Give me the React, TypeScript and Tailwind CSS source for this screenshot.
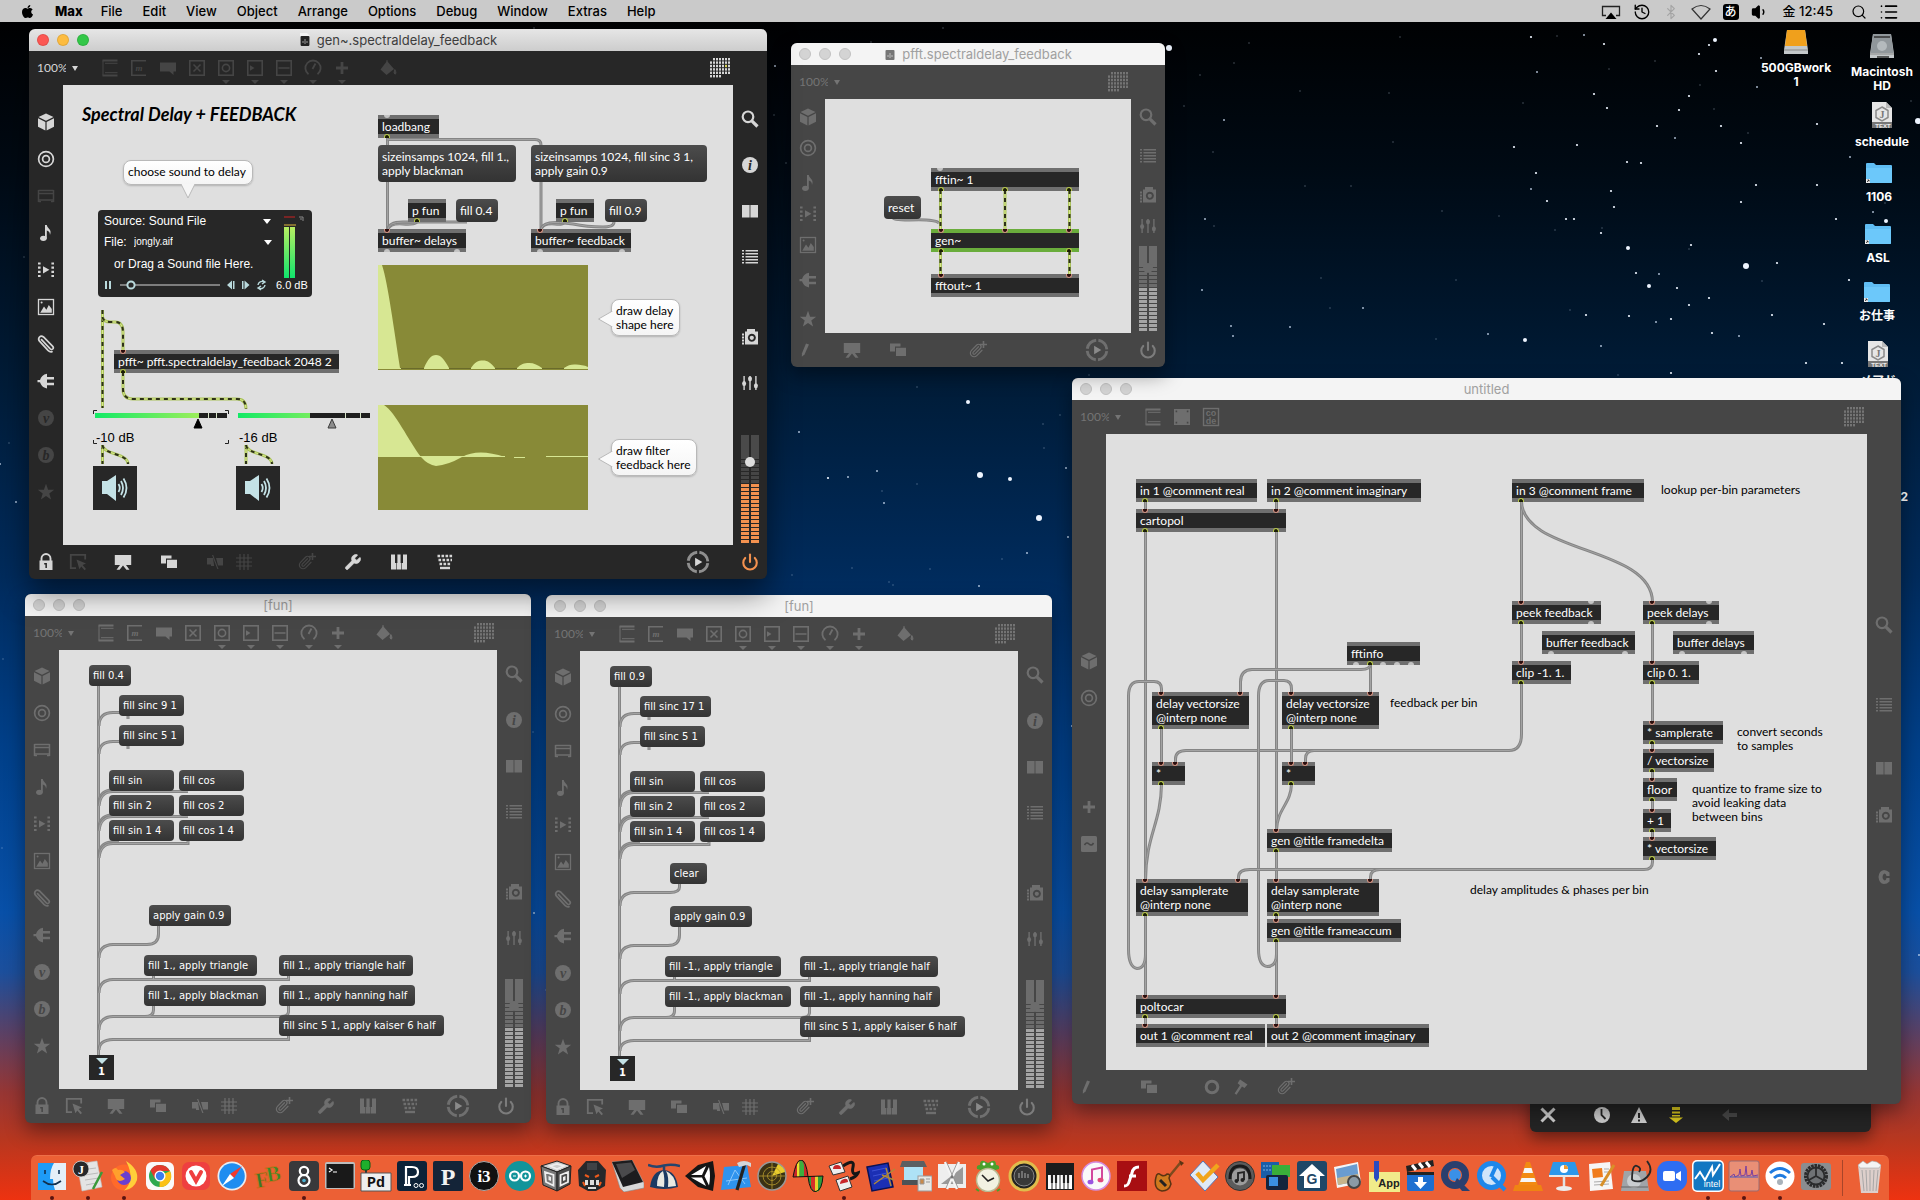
import { type ReactNode } from 'react'
import { Airplay, Bluetooth, History, List, Paperclip, Power, Search, Volume1, Wrench } from 'lucide-react'
import { FaApple } from 'react-icons/fa'

interface PatchNode {
  x: number
  y: number
  w: number
  text: string
  kind?: 'obj' | 'msg' | 'gen'
  tall?: boolean
  ins?: number[]
  outs?: number[]
  openIns?: number[]
  openOuts?: number[]
}

interface Comment {
  x: number
  y: number
  w: number
  text: string
}

interface Tool {
  icon: string
  gap: string
  dim?: boolean
}

// ─── toolbar glyphs ────────────────────────────────────────────────────
const GLYPHS: Record<string, ReactNode> = {
  cube: (
    <g fill="currentColor">
      <path d="M10 1.5 17.5 5 10 8.8 2.5 5Z" />
      <path d="M2 6.2 9.4 9.9V18.5L2 14.8Z" />
      <path d="M18 6.2 10.6 9.9V18.5L18 14.8Z" />
    </g>
  ),
  target: (
    <g fill="none" stroke="currentColor" strokeWidth="1.7">
      <circle cx="10" cy="10" r="7.4" />
      <circle cx="10" cy="10" r="3.4" />
    </g>
  ),
  module: (
    <g fill="none" stroke="currentColor" strokeWidth="1.5">
      <path d="M2.5 4.5H17.5M2.5 4V16M17.5 4V16M2.5 7.5H17.5M2.5 14H17.5" />
      <path d="M2.5 15.5H5M15 15.5H17.5" />
    </g>
  ),
  note: (
    <g fill="currentColor">
      <ellipse cx="7.4" cy="15.3" rx="3.3" ry="2.6" />
      <path d="M9 2H10.8C11.200 5.500 16.400 6.200 14 12 14 9 12.400 8.200 10.800 7.600V15.500H9Z" />
    </g>
  ),
  video: (
    <g fill="currentColor">
      <path d="M2 2.5H4.6V4.6H2ZM2 6.6H4.6V8.7H2ZM2 10.8H4.6V12.9H2ZM2 15H4.6V17.1H2Z" />
      <path d="M15.4 2.5H18V4.6H15.4ZM15.4 6.6H18V8.7H15.4ZM15.4 10.8H18V12.9H15.4ZM15.4 15H18V17.1H15.4Z" />
      <path d="M7 6.2 13.4 9.8 7 13.4Z" />
    </g>
  ),
  image: (
    <g>
      <rect x="2.5" y="2.5" width="15" height="15" fill="none" stroke="currentColor" strokeWidth="1.3" />
      <path d="M4.2 15.8 8 9.5 10.4 12.8 12.8 8 15.8 12V15.8Z" fill="currentColor" />
      <circle cx="5.6" cy="5.6" r="1" fill="currentColor" />
    </g>
  ),
  clip: <path d="M5 5.500 13.500 14.500Q15 16 16.300 14.800 17.500 13.500 16 12L7 2.800Q4.800 1 3 2.800 1.300 4.800 3 7L11.500 16.200Q13.500 18.200 15.500 17.500" transform="translate(.500 .200)" fill="none" stroke="currentColor" strokeWidth="1.700" strokeLinecap="round" />,
  plug: (
    <path
      d="M1.5 9H4C5 6 7 3.5 11 2.8V6H18V8.4H11V11.8H18V14.2H11V17.4C7 16.8 5 14 4 11.2H1.5Z"
      fill="currentColor"
    />
  ),
  star: <path d="M10 1.8 12.1 7.7 18.2 7.8 13.3 11.6 15.1 17.6 10 14 4.9 17.6 6.7 11.6 1.8 7.8 7.9 7.7Z" fill="currentColor" />,
  search: (
    <g fill="none" stroke="currentColor">
      <circle cx="8" cy="7.800" r="5.300" strokeWidth="2.200" />
      <path d="M11.800 11.800 17.500 17.500" strokeWidth="3.200" />
    </g>
  ),
  book: <path d="M2 4H9.6V16.5H2ZM10.4 4H18V16.5H10.4Z" fill="currentColor" />,
  list: (
    <path
      d="M2 3H4V4.6H2ZM5.5 3H18V4.6H5.5ZM2 6H4V7.6H2ZM5.5 6H18V7.6H5.5ZM2 9H4V10.6H2ZM5.5 9H18V10.6H5.5ZM2 12H4V13.6H2ZM5.5 12H18V13.6H5.5ZM2 15H4V16.6H2ZM5.5 15H18V16.6H5.5Z"
      fill="currentColor"
    />
  ),
  camera: (
    <g>
      <path fillRule="evenodd" d="M5 4.5H7V2H15V4.5H18V17.5H5ZM11.8 6.8a4 4 0 1 0 .1 0Z" fill="currentColor" />
      <circle cx="11.8" cy="10.8" r="2.1" fill="currentColor" />
      <path d="M2 6.5H4V8.5H2ZM2 9.5H4V11.5H2ZM2 12.5H4V14.5H2ZM2 15.5H4V17.5H2Z" fill="currentColor" />
    </g>
  ),
  sliders: (
    <g fill="currentColor">
      <path d="M3.4 3H4.8V17H3.4ZM9.3 3H10.7V17H9.3ZM15.2 3H16.6V17H15.2Z" />
      <ellipse cx="4.1" cy="10.5" rx="2" ry="2.6" />
      <ellipse cx="10" cy="5.8" rx="2" ry="2.6" />
      <ellipse cx="15.9" cy="12.8" rx="2" ry="2.6" />
    </g>
  ),
  power: <Power x="1" y="1" width="18" height="18" strokeWidth={2.8} />,
  lock: (
    <g>
      <path d="M5.5 9V6.5a4.5 4.5 0 0 1 9 0V9" fill="none" stroke="currentColor" strokeWidth="1.9" />
      <path fillRule="evenodd" d="M3.5 8.5H16.5V18H3.5ZM8.2 11V12.5H9.4V16H10.9V11Z" fill="currentColor" />
    </g>
  ),
  pencil: <path d="M11 3.5 14 4.5 9.5 14.5 6.8 16.8 7 13.2Z" fill="currentColor" />,
  select: (
    <g>
      <path d="M8 16.2H2.8V2.8H17.2V7.5" fill="none" stroke="currentColor" strokeWidth="1.8" />
      <path d="M8.5 7.5 18 11.5 14.6 13 18 17 16.5 18.3 13.3 14.4 11.4 17.2Z" fill="currentColor" />
    </g>
  ),
  easel: <path d="M1.8 3H18.2V13H13L16.5 17.8H13.4L10 13.6 6.6 17.8H3.5L7 13H1.8Z" fill="currentColor" />,
  copies: <path d="M2 3.5H12.5V6.5H7V11.5H2ZM8 7.8H18V16H8Z" fill="currentColor" />,
  cut: <path d="M2 6H8L9.200 14H6V12.5H2ZM7 3H8.200L13.5 17H12.3ZM11 6H18V13.5H13Z" fill="currentColor" />,
  grid: <path d="M6 2V18M10 2V18M14 2V18M2 6H18M2 10H18M2 14H18" stroke="currentColor" strokeWidth="1.2" fill="none" />,
  clipAdd: (
    <g>
      <Paperclip x="0.5" y="3" width="15" height="15" strokeWidth={1.9} />
      <path d="M15.500 1V8M12 4.500H19" stroke="currentColor" strokeWidth="1.6" />
    </g>
  ),
  wrench: <Wrench x="1" y="1" width="18" height="18" fill="currentColor" strokeWidth={1} />,
  piano: <path d="M2 2.5H6V11H7V17.5H2ZM8 2.5H8.4V11H7.6V17.5H12.4V11H11.6V2.5ZM14 2.5H18V17.5H13V11H14Z" fill="currentColor" />,
  keyboard: (
    <g stroke="currentColor" fill="none">
      <path d="M2.5 4H18M3.5 8H17M4.5 12H16" strokeWidth="2.4" strokeDasharray="2.6 1.4" />
      <path d="M5 16H15" strokeWidth="2.4" />
    </g>
  ),
  play: (
    <g>
      <circle cx="10" cy="10" r="8.2" fill="none" stroke="currentColor" strokeOpacity="0.6" strokeWidth="2.4" strokeDasharray="11 1.880" strokeDashoffset="-0.94" />
      <path d="M7.6 6.4 13.6 10 7.6 13.6Z" fill="currentColor" />
    </g>
  ),
  object: (
    <g fill="none" stroke="currentColor">
      <path d="M2.5 2.5H17.5M2.5 17.5H17.5" strokeWidth="1.8" />
      <path d="M3 2.5V17.5M5 5.3H17.5M5 14.7H17.5" strokeWidth="1" />
    </g>
  ),
  comment: <path d="M2 4.5H18V13.5H15.5V17L11.5 13.5H2Z" fill="currentColor" />,
  toggle: (
    <g fill="none" stroke="currentColor" strokeWidth="1.6">
      <rect x="2.8" y="2.8" width="14.4" height="14.4" />
      <path d="M6.5 6.5 13.5 13.5M13.5 6.5 6.5 13.5" />
    </g>
  ),
  bang: (
    <g fill="none" stroke="currentColor" strokeWidth="1.6">
      <rect x="2.8" y="2.8" width="14.4" height="14.4" />
      <circle cx="10" cy="10" r="3.6" />
    </g>
  ),
  number: (
    <g>
      <rect x="2.8" y="2.8" width="14.4" height="14.4" fill="none" stroke="currentColor" strokeWidth="1.6" />
      <path d="M5 7.2 9.5 10 5 12.8Z" fill="currentColor" />
    </g>
  ),
  slider: (
    <g fill="none" stroke="currentColor" strokeWidth="1.6">
      <rect x="2.8" y="2.8" width="14.4" height="14.4" />
      <path d="M4.5 10H15.5" />
    </g>
  ),
  dial: (
    <g fill="none" stroke="currentColor" strokeWidth="1.8">
      <path d="M5.5 16.2a7.6 7.6 0 1 1 9 0M9.5 11 12.5 5.5" />
    </g>
  ),
  plus: <path d="M8.6 4H11.4V8.6H16V11.4H11.4V16H8.6V11.4H4V8.6H8.6Z" fill="currentColor" />,
  bucket: (
    <g>
      <path d="M9 3 16 11 8.5 17 2.5 11.5Z" fill="currentColor" />
      <path d="M9 9V2M16.8 11.5Q19 15.5 17 16.2 15.2 15.5 16.8 11.5Z" fill="currentColor" stroke="currentColor" strokeWidth="1" />
    </g>
  ),
  panel: <path fillRule="evenodd" d="M2 2H18V18H2ZM3.6 3.6V5.2H5.2V3.6ZM14.8 3.6V5.2H16.4V3.6ZM3.6 14.8V16.4H5.2V14.8ZM14.8 14.8V16.4H16.4V14.8Z" fill="currentColor" />,
  ring: <circle cx="10" cy="10" r="5.8" fill="none" stroke="currentColor" strokeWidth="3" />,
  hammer: <path d="M9 2.5 16.5 7.5 13.5 11 11 9.6 5.5 17.8 3.6 16.6 9 8.3 6.6 6.3Z" fill="currentColor" />,
  tilde: (
    <g>
      <rect x="2" y="2" width="16" height="16" rx="1.5" fill="currentColor" />
      <path d="M5.5 11Q7.5 7.5 10 10T14.5 9" stroke="#464646" strokeWidth="1.6" fill="none" />
    </g>
  ),
}

const LETTER_GLYPHS: Record<string, { text: string; disc: boolean }> = {
  info: { text: 'i', disc: true },
  v: { text: 'v', disc: true },
  b: { text: 'b', disc: true },
  message: { text: 'm', disc: false },
}

function Glyph({ name, active }: { name: string; active: boolean }) {
  const letter = LETTER_GLYPHS[name]
  return (
    <svg viewBox="0 0 20 20" className="size-full">
      {GLYPHS[name]}
      {letter?.disc && (
        <>
          <circle cx="10" cy="10" r="8" fill="currentColor" />
          <text x="10" y="14.5" textAnchor="middle" fontSize="14" fontStyle="italic" fontWeight="700" fontFamily="Liberation Serif, serif" fill={active ? '#272727' : '#464646'}>
            {letter.text}
          </text>
        </>
      )}
      {name === 'message' && (
        <>
          <path d="M17 2.8H2.8V17.2H17" fill="none" stroke="currentColor" strokeWidth="1.6" />
          <text x="10" y="13" textAnchor="middle" fontSize="9" fontStyle="italic" fontWeight="700" fontFamily="Liberation Serif, serif" fill="currentColor">
            m
          </text>
        </>
      )}
      {name === 'code' && (
        <>
          <rect x="2.5" y="1.5" width="15" height="17" fill="none" stroke="currentColor" strokeWidth="1.4" />
          <text x="10" y="9" textAnchor="middle" fontSize="9" fontWeight="700" fontFamily="Liberation Sans, sans-serif" fill="currentColor">co</text>
          <text x="10" y="17" textAnchor="middle" fontSize="9" fontWeight="700" fontFamily="Liberation Sans, sans-serif" fill="currentColor">de</text>
        </>
      )}
      {name === 'c' && <path d="M15.500 5.500Q13 3 10 3 5 3.500 4.500 10 5 16.500 10 17 13 17 15.500 14.500V11H12.500Q12 13.500 10.500 13.500 8.500 13 8.500 10T10.500 6.500Q12 6.500 12.500 9H15.500Z" fill="currentColor" />}
    </svg>
  )
}

function GridGlyph({ active }: { active: boolean }) {
  const cells = []
  for (let r = 0; r < 6; r++) {
    for (let c = 0; c < 7; c++) {
      if ((r === 0 && c === 0) || (r === 5 && c > 3)) continue
      cells.push(<rect key={`${r}-${c}`} x={c * 3} y={r * 3.4} width="2" height="2.4" fill={active && r === 2 && c === 5 ? '#d8d35a' : 'currentColor'} />)
    }
  }
  return <svg viewBox="0 0 21 20" className="h-5 w-[21px]">{cells}</svg>
}

function Meter({ active, short }: { active: boolean; short?: boolean }) {
  const rows = short ? 16 : 21
  const total = short ? 85 : 108
  const lit = short ? 11 : 15
  const pitch = 4
  return (
    <svg width="20" height={total} viewBox={`0 0 20 ${total}`} aria-label="output level">
      {[1, 11].map((x) => (
        <g key={x}>
          <rect x={x} y="0" width="8" height={total - rows * pitch} fill={active ? '#4a4a4a' : '#6c6c6c'} />
          {Array.from({ length: rows }, (_, i) => (
            <rect key={i} x={x} y={total - 3 - i * pitch} width="8" height="3" fill={i < lit ? (active ? '#f3914f' : '#a4a4a4') : active ? '#454545' : '#6c6c6c'} />
          ))}
        </g>
      ))}
      <circle cx="10" cy={short ? 22 : 27} r="5" fill={active ? '#dedede' : '#6c6c6c'} />
    </svg>
  )
}

// ─── window chrome ─────────────────────────────────────────────────────
function ToolButton({ tool, active, menu }: { tool: Tool; active: boolean; menu?: boolean }) {
  const tone = active ? (tool.dim ? 'text-[#454545]' : 'text-[#d6d6d6]') : 'text-[#6e6e6e]'
  return (
    <button type="button" aria-label={tool.icon} className={`relative size-5 shrink-0 ${tone} ${tool.gap}`}>
      <Glyph name={tool.icon} active={active} />
      {menu && <span className="absolute top-[22px] left-1.5 border-x-4 border-t-4 border-x-transparent border-t-current" />}
    </button>
  )
}

interface WindowProps {
  title: string
  place: string
  active?: boolean
  file?: boolean
  top: Tool[]
  left: Tool[]
  right: Tool[]
  bottom: Tool[]
  playGap?: string
  powerGap?: string
  meter?: 'long' | 'short'
  children: ReactNode
}

const MENU_TOOLS = ['bang', 'number', 'slider', 'dial', 'plus']

function PatcherWindow(p: WindowProps) {
  const active = p.active ?? false
  const frame = active ? 'bg-[#272727]' : 'bg-[#464646]'
  const lights = active
    ? ['bg-[#fc5753] border-black/10', 'bg-[#fdbc40] border-black/10', 'bg-[#33c748] border-black/10']
    : ['bg-[#d4d4d4] border-[#c2c2c2]', 'bg-[#d4d4d4] border-[#c2c2c2]', 'bg-[#d4d4d4] border-[#c2c2c2]']
  return (
    <section className={`absolute flex flex-col overflow-hidden rounded-md ${frame} ${p.place} ${active ? 'shadow-[0_14px_30px_rgba(0,0,0,0.5)]' : 'shadow-[0_8px_20px_rgba(0,0,0,0.4)]'}`}>
      <header className={`relative flex h-[22px] shrink-0 items-center justify-center ${active ? 'bg-linear-to-b from-[#e6e6e6] to-[#cdcdcd]' : 'bg-[#f4f4f4]'}`}>
        <div className="absolute left-2 flex gap-2">
          {lights.map((c, i) => (
            <button key={i} type="button" aria-label="window control" className={`size-3 rounded-full border ${c}`} />
          ))}
        </div>
        {p.file && (
          <svg viewBox="0 0 12 14" className={`mr-1.5 h-3.5 w-3 ${active ? '' : 'opacity-60'}`}>
            <path d="M1 0H8L11 3V13H1Z" fill="#f2f2f2" />
            <rect x="1.500" y="3" width="9" height="10" rx="1" fill="#222" />
            <path d="M4 10V8M6 11V6M8 10V8" stroke="#999" />
          </svg>
        )}
        <h2 className={`pt-px text-[13px] [font-family:Inter,sans-serif] ${active ? 'text-[#3d3d3d]' : 'text-[#a0a0a0]'}`}>{p.title}</h2>
      </header>
      <div className={`flex h-[34px] shrink-0 items-center ${active ? 'text-[#d6d6d6]' : 'text-[#747474]'}`}>
        <div className="flex w-[70px] items-center gap-1.5 pl-2">
          <select aria-label="zoom" className="w-[29px] appearance-none text-[12px] leading-4 [font-family:Lato,sans-serif]">
            <option>100%</option>
          </select>
          <span className="border-x-3 border-t-5 border-x-transparent border-t-current" />
        </div>
        {p.top.map((t) => (
          <ToolButton key={t.icon} tool={t} active={active} menu={MENU_TOOLS.includes(t.icon)} />
        ))}
        <button type="button" aria-label="grid" className="mr-9 ml-auto">
          <GridGlyph active={active} />
        </button>
      </div>
      <div className="flex min-h-0 flex-1">
        <nav className="flex w-[34px] shrink-0 flex-col items-center">
          {p.left.map((t) => (
            <ToolButton key={t.icon} tool={t} active={active} />
          ))}
        </nav>
        <main className="relative flex-1 overflow-hidden bg-[#dfdfdf]">{p.children}</main>
        <nav className="flex w-[34px] shrink-0 flex-col items-center">
          {p.right.map((t) => (
            <ToolButton key={t.icon} tool={t} active={active} />
          ))}
          {p.meter && (
            <div className="mt-auto mb-0.5">
              <Meter active={active} short={p.meter === 'short'} />
            </div>
          )}
        </nav>
      </div>
      <footer className="flex h-[34px] shrink-0 items-center">
        {p.bottom.map((t) => (
          <ToolButton key={t.icon} tool={t} active={active} />
        ))}
        {p.playGap && (
          <>
            <button type="button" aria-label="play" className={`ml-auto size-6 ${active ? 'text-[#d6d6d6]' : 'text-[#8a8a8a]'} ${p.playGap}`}>
              <Glyph name="play" active={active} />
            </button>
            <button type="button" aria-label="audio" className={`size-5 ${p.powerGap ?? 'mr-[7px]'} ${active ? 'text-[#f3914f]' : 'text-[#7c7c7c]'}`}>
              <Glyph name="power" active={active} />
            </button>
          </>
        )}
      </footer>
    </section>
  )
}

// ─── patch contents ────────────────────────────────────────────────────
function Ports({ node }: { node: PatchNode }) {
  return (
    <>
      {node.ins?.map((x) => (
        <span key={`i${x}`} style={{ left: x - 3 }} className="absolute top-0 h-1 w-1.5 rounded-b-full border-x border-b border-[#d29483] bg-[#2a0d0d]" />
      ))}
      {node.outs?.map((x) => (
        <span key={`o${x}`} style={{ left: x - 3 }} className="absolute bottom-0 h-1 w-1.5 rounded-t-full border-x border-t border-[#b8c94a] bg-[#1a1d05]" />
      ))}
      {node.openIns?.map((x) => (
        <span key={`p${x}`} style={{ left: x - 3 }} className="absolute top-0 h-[3px] w-1.5 rounded-b-full bg-[#c4c4c4]" />
      ))}
      {node.openOuts?.map((x) => (
        <span key={`q${x}`} style={{ left: x - 3 }} className="absolute bottom-0 h-[3px] w-1.5 rounded-t-full bg-[#c4c4c4]" />
      ))}
    </>
  )
}

function Box({ node, small }: { node: PatchNode; small?: boolean }) {
  const at = { left: node.x, top: node.y, width: node.w }
  if (node.kind === 'msg') {
    const size = small ? 'h-[21px] text-[10px] leading-[14px] [font-family:"DejaVu_Sans",sans-serif]' : node.tall ? 'h-[37px] text-[12px] leading-[14px]' : 'h-[23px] text-[12px] leading-[14px]'
    return (
      <button type="button" style={at} className={`absolute rounded-[4px] bg-linear-to-b from-[#4c4c4c] to-[#333333] pl-1 text-left whitespace-pre text-white ${size}`}>
        {node.text}
      </button>
    )
  }
  return (
    <div
      style={at}
      className={`absolute border-y-4 bg-[#272727] pt-px pl-1 text-[12px] leading-[14px] whitespace-pre text-white ${node.kind === 'gen' ? 'border-[#6aad3c]' : 'border-[#6f6f6f]'} ${node.tall ? 'h-[37px]' : 'h-[23px]'}`}
    >
      {node.text}
      <div className="absolute inset-x-0 -inset-y-1">
        <Ports node={node} />
      </div>
    </div>
  )
}

function Wires({ paths, signal }: { paths: string[]; signal?: boolean }) {
  return (
    <svg className="absolute inset-0 size-full" fill="none">
      {paths.map((d) =>
        signal ? (
          <g key={d}>
            <path d={d} stroke="#a9c25a" strokeWidth="3" />
            <path d={d} stroke="#d8e88a" strokeWidth="1" />
            <path d={d} stroke="#2d3018" strokeWidth="2" strokeDasharray="4 4" />
          </g>
        ) : (
          <g key={d}>
            <path d={d} stroke="#858585" strokeWidth="3" />
            <path d={d} stroke="#a3a3a3" strokeWidth="1" />
          </g>
        ),
      )}
    </svg>
  )
}

function Notes({ notes }: { notes: Comment[] }) {
  return notes.map((n) => (
    <p key={n.text} style={{ left: n.x, top: n.y, width: n.w }} className="absolute text-[12px] leading-[14px] whitespace-pre text-black">
      {n.text}
    </p>
  ))
}

function Speaker({ x }: { x: number }) {
  return (
    <button type="button" aria-label="dac" style={{ left: x }} className="absolute top-[381px] flex size-11 items-center justify-center bg-[#272727]">
      <svg viewBox="0 0 32 32" className="size-8">
        <path d="M3 9H8L17 3V29L8 22H3Z" fill="#c4e2e6" />
        <path d="M19.5 12Q22 16 19.5 20M22 9Q26 16 22 23M24.5 6.5Q30.500 16 24.500 25.5" stroke="#c4e2e6" strokeWidth="1.8" fill="none" />
      </svg>
    </button>
  )
}

function GainSlider({ x, level, knob, ticks, dark }: { x: number; level: number; knob: number; ticks: number[]; dark: boolean }) {
  return (
    <div style={{ left: x }} className="absolute top-[328px] h-4 w-[132px]">
      <svg viewBox="0 0 132 16" className="h-4 w-[132px]">
        <defs>
          <linearGradient id={`gain${x}`} gradientUnits="userSpaceOnUse" x1="0" x2="110" y1="0" y2="0">
            <stop offset="0" stopColor="#12ea66" />
            <stop offset="1" stopColor="#a5ee5b" />
          </linearGradient>
        </defs>
        <rect width="132" height="5" fill="#1f1f1f" />
        <rect width={level} height="5" fill={`url(#gain${x})`} />
        {ticks.map((t) => (
          <rect key={t} x={t} width="1" height="5" fill="#d8e6c8" />
        ))}
        <path d={`M${knob} 6L${knob + 4} 15H${knob - 4}Z`} fill={dark ? '#000' : '#8c8c8c'} stroke={dark ? '#000' : '#3c3c3c'} />
      </svg>
      <input type="range" aria-label="gain" className="absolute inset-0 size-full opacity-0" />
    </div>
  )
}

function Bubble({ place, text, tail }: { place: string; text: string; tail: 'down' | 'left' }) {
  return (
    <div className={`absolute rounded-[8px] border border-[#b9b9b9] bg-linear-to-b from-white to-[#f5f5f5] pt-1 pr-1.5 pl-1 text-[12px] leading-[14px] whitespace-pre text-black shadow-[0_1px_2px_rgba(0,0,0,0.2)] ${place}`}>
      {text}
      {tail === 'down' ? (
        <svg viewBox="0 0 14 16" className="absolute top-[22px] left-[57px] h-4 w-3.5">
          <path d="M0 1 7 15 14 1" fill="#f6f6f6" stroke="#b9b9b9" />
        </svg>
      ) : (
        <svg viewBox="0 0 15 16" className="absolute top-[11px] -left-[15px] h-4 w-4">
          <path d="M15 0 1 8 15 16" fill="#fafafa" stroke="#b9b9b9" />
        </svg>
      )}
    </div>
  )
}

function Playlist() {
  return (
    <div className="absolute top-[125px] left-[35px] flex h-[87px] w-[214px] flex-col justify-between rounded-[4px] bg-[#272727] pt-[3px] pb-1 pl-1.5 text-[12px] text-white [font-family:'Liberation_Sans',sans-serif]">
      <label className="flex w-[167px] items-center justify-between leading-4">
        <select aria-label="source" className="appearance-none">
          <option>Source: Sound File</option>
        </select>
        <span className="border-x-4 border-t-5 border-x-transparent border-t-white" />
      </label>
      <label className="flex w-[168px] items-center leading-4">
        <span className="w-[30px]">File:</span>
        <select className="appearance-none text-[10px]">
          <option>jongly.aif</option>
        </select>
        <span className="ml-auto border-x-4 border-t-5 border-x-transparent border-t-white" />
      </label>
      <p className="pl-2.5 leading-4">or Drag a Sound file Here.</p>
      <div className="flex h-4 items-center">
        <svg viewBox="0 0 170 16" className="h-4 w-[170px]">
          <path d="M1 4H3V12H1ZM5 4H7V12H5Z" fill="#b9d9dc" />
          <path d="M16 8H116" stroke="#7d7d7d" strokeWidth="2" />
          <circle cx="27" cy="8" r="3.600" fill="#272727" stroke="#b9d9dc" strokeWidth="2" />
          <path d="M123 8 128 3.500V12.500ZM129 4V12H130.500V4ZM138 4V12H139.500V4ZM140.500 3.500 145.500 8 140.500 12.500Z" fill="#b9d9dc" />
          <path d="M154 8a4 4 0 0 1 6-3M161 8a4 4 0 0 1-6 3M158 3 161 5 158 7M157 9 154 11 157 13" stroke="#b9d9dc" strokeWidth="1.400" fill="none" />
        </svg>
        <span className="ml-0.5 text-[11px]">6.0 dB</span>
      </div>
      <svg viewBox="0 0 24 64" className="absolute top-1.5 left-[186px] h-16 w-6">
        <defs>
          <linearGradient id="level" x1="0" x2="0" y1="0" y2="1">
            <stop offset="0" stopColor="#b8ee62" />
            <stop offset="1" stopColor="#10e46c" />
          </linearGradient>
        </defs>
        <path d="M0 1H11" stroke="#c22" strokeWidth="1" />
        <path d="M0 9H12" stroke="#e0b83a" strokeWidth="1" />
        <rect y="11" width="5" height="51" fill="url(#level)" />
        <rect x="6" y="11" width="5" height="51" fill="url(#level)" />
        <path d="M15 1H19V5M16 3H18" stroke="#8a8a8a" fill="none" />
      </svg>
    </div>
  )
}

const LEFT_ALL = ['cube', 'target', 'module', 'note', 'video', 'image', 'clip', 'plug', 'v', 'b', 'star']
const TOP_ALL = ['object', 'message', 'comment', 'toggle', 'bang', 'number', 'slider', 'dial', 'plus']

const mainLeft: Tool[] = LEFT_ALL.map((icon, i) => ({ icon, gap: i === 0 ? 'mt-[27px]' : 'mt-[17px]', dim: ['module', 'v', 'b', 'star'].includes(icon) }))
const funLeft: Tool[] = LEFT_ALL.map((icon, i) => ({ icon, gap: i === 0 ? 'mt-4' : 'mt-[17px]' }))
const topTools: Tool[] = TOP_ALL.map((icon, i) => ({ icon, gap: i === 0 ? 'ml-px' : 'ml-[9px]', dim: true }))
topTools.push({ icon: 'bucket', gap: 'ml-[26px]', dim: true })
const funTop: Tool[] = topTools.map((t) => ({ ...t, dim: false }))

const mainRight: Tool[] = [
  { icon: 'search', gap: 'mt-6' },
  { icon: 'info', gap: 'mt-[26px]' },
  { icon: 'book', gap: 'mt-[26px]' },
  { icon: 'list', gap: 'mt-[26px]' },
  { icon: 'camera', gap: 'mt-[60px]' },
  { icon: 'sliders', gap: 'mt-[26px]' },
]
const funRight: Tool[] = mainRight.map((t, i) => (i === 0 ? { ...t, gap: 'mt-3.5' } : t))

const mainBottom: Tool[] = [
  { icon: 'lock', gap: 'ml-[7px]' },
  { icon: 'select', gap: 'ml-3', dim: true },
  { icon: 'easel', gap: 'ml-[25px]' },
  { icon: 'copies', gap: 'ml-[26px]' },
  { icon: 'cut', gap: 'ml-[26px]', dim: true },
  { icon: 'grid', gap: 'ml-[9px]', dim: true },
  { icon: 'clipAdd', gap: 'ml-[43px]', dim: true },
  { icon: 'wrench', gap: 'ml-[26px]' },
  { icon: 'piano', gap: 'ml-[26px]' },
  { icon: 'keyboard', gap: 'ml-[26px]' },
]
const FUN_GAPS = ['ml-[7px]', 'ml-3', 'ml-[22px]', 'ml-[22px]', 'ml-[22px]', 'ml-[9px]', 'ml-[35px]', 'ml-[22px]', 'ml-[22px]', 'ml-[22px]']
const funBottom: Tool[] = mainBottom.map((t, i) => ({ icon: t.icon, gap: FUN_GAPS[i] }))

// ─── gen~.spectraldelay_feedback ───────────────────────────────────────
const mainNodes: PatchNode[] = [
  { x: 315, y: 30, w: 61, text: 'loadbang', outs: [9], openIns: [9] },
  { x: 315, y: 60, w: 138, text: 'sizeinsamps 1024, fill 1.,\napply blackman', kind: 'msg', tall: true },
  { x: 468, y: 60, w: 176, text: 'sizeinsamps 1024, fill sinc 3 1,\napply gain 0.9', kind: 'msg', tall: true },
  { x: 345, y: 114, w: 38, text: 'p fun', outs: [9] },
  { x: 393, y: 114, w: 42, text: 'fill 0.4', kind: 'msg' },
  { x: 493, y: 114, w: 38, text: 'p fun', outs: [9] },
  { x: 542, y: 114, w: 42, text: 'fill 0.9', kind: 'msg' },
  { x: 315, y: 144, w: 88, text: 'buffer~ delays', ins: [9], openOuts: [9, 79] },
  { x: 468, y: 144, w: 100, text: 'buffer~ feedback', ins: [9], openOuts: [9, 91] },
  { x: 51, y: 265, w: 225, text: 'pfft~ pfft.spectraldelay_feedback 2048 2', ins: [9], outs: [9] },
]
const mainWires = [
  'M324.500 52V60',
  'M324.500 54.500H472Q478 54.500 478 60',
  'M324.500 96V145',
  'M478 96V145',
  'M354 136Q354 140 340 139Q326 138 325 145',
  'M404 137H340Q325 137 325 145',
  'M502 136Q502 140 492 139Q479 138 478 145',
  'M551 137Q551 142 540 142Q524 142 510 139Q479 134 478 145',
]
const mainSignals = [
  'M39.500 225V323',
  'M39.500 232Q40 237 48 237H52Q60 237 60 247V266',
  'M60 287V304Q60 314 70 314H174Q183 314 183 324',
  'M39.500 360V379',
  'M39.500 360C40 370 65 368 65 379',
  'M183 360V379',
  'M183 360C184 370 209 368 209 379',
]

function MainPatch() {
  return (
    <PatcherWindow title="gen~.spectraldelay_feedback" place="left-[29px] top-[29px] h-[550px] w-[738px]" active file top={topTools} left={mainLeft} right={mainRight} bottom={mainBottom} playGap="mr-[30px]" meter="long">
      <Wires paths={mainWires} />
      <h1 className="absolute top-[17px] left-[19px] text-[18px] leading-6 font-bold text-black italic">Spectral Delay + FEEDBACK</h1>
      <Bubble place="left-[60px] top-[75px] h-[25px]" text="choose sound to delay" tail="down" />
      <Playlist />
      <Wires paths={mainSignals} signal />
      {mainNodes.map((n) => (
        <Box key={`${n.x}-${n.y}`} node={n} />
      ))}
      <svg viewBox="0 0 210 105" className="absolute top-[180px] left-[315px] h-[105px] w-[210px]">
        <rect width="210" height="105" fill="#888a37" />
        <path d="M0 0H4C10 18 16 66 22 103H0Z" fill="#d7e793" />
        <path d="M46 103C50 94 53 90 58 90S66 94 71 103ZM93 103C97 97 100 95.500 105 95.500S113 98 117 103ZM139 103C143 99 146 98 151 98S160 100 164 103ZM186 103C190 100 194 99 198 99.500S206 100 210 102V103Z" fill="#d7e793" />
        <path d="M0 103.500H210" stroke="#d7e793" strokeWidth="1" />
        <path d="M23 103.500H46M71 103.500H93M117 103.500H139M164 103.500H186" stroke="#6a6b2b" strokeWidth="1" />
      </svg>
      <svg viewBox="0 0 210 105" className="absolute top-[320px] left-[315px] h-[105px] w-[210px]">
        <rect width="210" height="105" fill="#888a37" />
        <path d="M0 0H6C18 8 30 35 43 52H84Q100 43 127 52H0Z" fill="#d7e793" />
        <path d="M43 52Q50 60 58 61Q70 60 84 52Z" fill="#d7e793" />
        <path d="M0 51.500H127M168 51.500H210M136 52.500H147" stroke="#d7e793" strokeWidth="1" />
      </svg>
      <Bubble place="left-[548px] top-[214px] h-[37px]" text={'draw delay\nshape here'} tail="left" />
      <Bubble place="left-[548px] top-[354px] h-[37px]" text={'draw filter\nfeedback here'} tail="left" />
      <GainSlider x={32} level={104} knob={103} ticks={[113, 121]} dark />
      <GainSlider x={175} level={72} knob={94} ticks={[107, 122]} dark={false} />
      <svg viewBox="0 0 136 34" className="absolute top-[325px] left-[30px] h-[34px] w-[136px]" fill="none" stroke="#222">
        <path d="M.500 4V.500H4M132 .500H135.500V4M.500 30V33.500H4M132 33.500H135.500V30" />
      </svg>
      <p className="absolute top-[345px] left-[33px] text-[13px] leading-4 text-black [font-family:'Liberation_Sans',sans-serif]">-10 dB</p>
      <p className="absolute top-[345px] left-[176px] text-[13px] leading-4 text-black [font-family:'Liberation_Sans',sans-serif]">-16 dB</p>
      <Speaker x={30} />
      <Speaker x={173} />
    </PatcherWindow>
  )
}

// ─── pfft.spectraldelay_feedback ───────────────────────────────────────
const pfftLeft: Tool[] = [
  { icon: 'cube', gap: 'mt-2' },
  { icon: 'target', gap: 'mt-[11px]' },
  { icon: 'note', gap: 'mt-[15px]' },
  { icon: 'video', gap: 'mt-[11px]' },
  { icon: 'image', gap: 'mt-[11px]' },
  { icon: 'plug', gap: 'mt-[15px]' },
  { icon: 'star', gap: 'mt-[19px]' },
]
const pfftRight: Tool[] = [
  { icon: 'search', gap: 'mt-2' },
  { icon: 'list', gap: 'mt-[19px]' },
  { icon: 'camera', gap: 'mt-[19px]' },
  { icon: 'sliders', gap: 'mt-[11px]' },
]
const pfftBottom: Tool[] = [
  { icon: 'pencil', gap: 'ml-1' },
  { icon: 'easel', gap: 'ml-[27px]' },
  { icon: 'copies', gap: 'ml-[26px]' },
  { icon: 'clipAdd', gap: 'ml-[60px]' },
]
const pfftNodes: PatchNode[] = [
  { x: 106, y: 69, w: 148, text: 'fftin~ 1', outs: [10, 74, 138], openIns: [9] },
  { x: 59, y: 97, w: 37, text: 'reset', kind: 'msg' },
  { x: 106, y: 130, w: 148, text: 'gen~', kind: 'gen', ins: [10, 74, 138], outs: [10, 138] },
  { x: 106, y: 175, w: 148, text: 'fftout~ 1', ins: [10, 138] },
]

function PfftPatch() {
  return (
    <PatcherWindow title="pfft.spectraldelay_feedback" place="left-[791px] top-[43px] h-[324px] w-[374px]" file top={[]} left={pfftLeft} right={pfftRight} bottom={pfftBottom} playGap="mr-[29px]" meter="short">
      <Wires paths={['M68 119Q68 121 84 121Q110 120 114 124']} />
      <Wires signal paths={['M115.500 91V131', 'M180 91V131', 'M244.500 91V131', 'M115.500 152V176', 'M244.500 152V176']} />
      {pfftNodes.map((n) => (
        <Box key={`${n.x}-${n.y}`} node={n} />
      ))}
    </PatcherWindow>
  )
}

// ─── untitled (gen) ────────────────────────────────────────────────────
const genNodes: PatchNode[] = [
  { x: 30, y: 45, w: 121, text: 'in 1 @comment real', outs: [9] },
  { x: 161, y: 45, w: 154, text: 'in 2 @comment imaginary', outs: [9] },
  { x: 406, y: 45, w: 132, text: 'in 3 @comment frame', outs: [9] },
  { x: 30, y: 75, w: 150, text: 'cartopol', ins: [9, 140], outs: [9, 140] },
  { x: 406, y: 167, w: 89, text: 'peek feedback', ins: [9], outs: [9], openIns: [79], openOuts: [79] },
  { x: 537, y: 167, w: 76, text: 'peek delays', ins: [9], outs: [9], openIns: [66], openOuts: [66] },
  { x: 436, y: 197, w: 93, text: 'buffer feedback', openOuts: [9, 83] },
  { x: 567, y: 197, w: 81, text: 'buffer delays', openOuts: [9, 71] },
  { x: 406, y: 227, w: 59, text: 'clip -1. 1.', ins: [9], outs: [9] },
  { x: 537, y: 227, w: 56, text: 'clip 0. 1.', ins: [9], outs: [9] },
  { x: 241, y: 208, w: 73, text: 'fftinfo', outs: [23], openOuts: [9, 36, 50, 64] },
  { x: 46, y: 258, w: 97, text: 'delay vectorsize\n@interp none', tall: true, ins: [9, 88], outs: [9] },
  { x: 176, y: 258, w: 97, text: 'delay vectorsize\n@interp none', tall: true, ins: [9, 88], outs: [9] },
  { x: 537, y: 287, w: 80, text: '* samplerate', ins: [9], outs: [9] },
  { x: 537, y: 315, w: 71, text: '/ vectorsize', ins: [9], outs: [9] },
  { x: 537, y: 344, w: 34, text: 'floor', ins: [9], outs: [9] },
  { x: 537, y: 375, w: 28, text: '+ 1', ins: [9], outs: [9] },
  { x: 537, y: 403, w: 73, text: '* vectorsize', ins: [9], outs: [9] },
  { x: 46, y: 328, w: 33, text: '*', ins: [9, 23], outs: [9] },
  { x: 176, y: 328, w: 33, text: '*', ins: [9, 23], outs: [9] },
  { x: 161, y: 395, w: 125, text: 'gen @title framedelta', ins: [9], outs: [9] },
  { x: 30, y: 445, w: 112, text: 'delay samplerate\n@interp none', tall: true, ins: [9, 102], outs: [9] },
  { x: 161, y: 445, w: 112, text: 'delay samplerate\n@interp none', tall: true, ins: [9, 103], outs: [9] },
  { x: 161, y: 485, w: 134, text: 'gen @title frameaccum', ins: [9], outs: [9] },
  { x: 30, y: 561, w: 150, text: 'poltocar', ins: [9, 140], outs: [9, 140] },
  { x: 30, y: 590, w: 129, text: 'out 1 @comment real', ins: [9] },
  { x: 161, y: 590, w: 162, text: 'out 2 @comment imaginary', ins: [9] },
]
const genWires = [
  'M39.500 67V76',
  'M170.500 67V76',
  'M39.500 97V446',
  'M170.500 97V396',
  'M170.500 417V446',
  'M170.500 481V486',
  'M170.500 507V562',
  'M39.500 481V562',
  'M39.500 583V591',
  'M170.500 583V591',
  'M415.500 67V168',
  'M415.500 67C416 120 546 112 546.500 168',
  'M415.500 189V228',
  'M546.500 189V228',
  'M546.500 249V288',
  'M546.500 309V316',
  'M546.500 337V345',
  'M546.500 366V376',
  'M546.500 397V404',
  'M415.500 249V300Q415.500 316.500 403 316.500H80Q69.500 316.500 69.500 325V329',
  'M208 316.500Q199.500 316.500 199.500 325V329',
  'M264.500 230V259',
  'M264.500 230Q264.500 235.500 255 235.500H146Q134.500 236 134.500 248V259',
  'M39.500 520Q39.500 534.500 31 534.500Q22.500 533 22.500 515V262Q22.500 247.500 33 247.500H48Q55.500 247.500 55.500 255V259',
  'M170.500 520Q170.500 532.500 161.500 532.500Q152.500 532 152.500 515V262Q152.500 246.500 163 246.500H178Q185.500 246.500 185.500 255V259',
  'M55.500 294V329',
  'M185.500 294V329',
  'M55.500 350C55 390 40 400 39.500 446',
  'M185.500 350C185 370 171 375 170.500 396',
  'M546.500 425V428Q546.500 435.500 538 435.500H144Q132.500 435.500 132.500 443V446',
  'M274 435.500Q264.500 435.500 264.500 443V446',
]
const genNotes: Comment[] = [
  { x: 555, y: 49, w: 150, text: 'lookup per-bin parameters' },
  { x: 284, y: 262, w: 100, text: 'feedback per bin' },
  { x: 631, y: 291, w: 100, text: 'convert seconds\nto samples' },
  { x: 586, y: 348, w: 150, text: 'quantize to frame size to\navoid leaking data\nbetween bins' },
  { x: 364, y: 449, w: 200, text: 'delay amplitudes & phases per bin' },
]
const genTop: Tool[] = [
  { icon: 'object', gap: 'ml-px' },
  { icon: 'panel', gap: 'ml-[9px]' },
  { icon: 'code', gap: 'ml-[9px]' },
]
const genLeft: Tool[] = [
  { icon: 'cube', gap: 'mt-[217px]' },
  { icon: 'target', gap: 'mt-[17px]' },
  { icon: 'plus', gap: 'mt-[89px]' },
  { icon: 'tilde', gap: 'mt-[17px]' },
]
const genRight: Tool[] = [
  { icon: 'search', gap: 'mt-[181px]' },
  { icon: 'list', gap: 'mt-[60px]' },
  { icon: 'book', gap: 'mt-[43px]' },
  { icon: 'camera', gap: 'mt-[27px]' },
  { icon: 'c', gap: 'mt-[42px]' },
]
const genBottom: Tool[] = [
  { icon: 'pencil', gap: 'ml-1' },
  { icon: 'copies', gap: 'ml-[43px]' },
  { icon: 'ring', gap: 'ml-[43px]' },
  { icon: 'hammer', gap: 'ml-[9px]' },
  { icon: 'clipAdd', gap: 'ml-[25px]' },
]

function GenPatch() {
  return (
    <PatcherWindow title="untitled" place="left-[1072px] top-[378px] h-[726px] w-[829px]" top={genTop} left={genLeft} right={genRight} bottom={genBottom}>
      <Wires paths={genWires} />
      {genNodes.map((n) => (
        <Box key={`${n.x}-${n.y}`} node={n} />
      ))}
      <Notes notes={genNotes} />
    </PatcherWindow>
  )
}

// ─── [fun] subpatchers ─────────────────────────────────────────────────
const sharedFun: PatchNode[] = [
  { x: 60, y: 75, w: 65, text: 'fill sinc 5 1' },
  { x: 50, y: 120, w: 65, text: 'fill sin' },
  { x: 120, y: 120, w: 65, text: 'fill cos' },
  { x: 50, y: 145, w: 65, text: 'fill sin 2' },
  { x: 120, y: 145, w: 65, text: 'fill cos 2' },
  { x: 50, y: 170, w: 65, text: 'fill sin 1 4' },
  { x: 120, y: 170, w: 65, text: 'fill cos 1 4' },
  { x: 90, y: 255, w: 82, text: 'apply gain 0.9' },
  { x: 220, y: 365, w: 165, text: 'fill sinc 5 1, apply kaiser 6 half' },
]
const funDelays: PatchNode[] = [
  ...sharedFun,
  { x: 30, y: 15, w: 42, text: 'fill 0.4' },
  { x: 60, y: 45, w: 65, text: 'fill sinc 9 1' },
  { x: 85, y: 305, w: 113, text: 'fill 1., apply triangle' },
  { x: 220, y: 305, w: 134, text: 'fill 1., apply triangle half' },
  { x: 85, y: 335, w: 122, text: 'fill 1., apply blackman' },
  { x: 220, y: 335, w: 136, text: 'fill 1., apply hanning half' },
]
const funFeedback: PatchNode[] = [
  ...sharedFun,
  { x: 30, y: 15, w: 42, text: 'fill 0.9' },
  { x: 60, y: 45, w: 71, text: 'fill sinc 17 1' },
  { x: 90, y: 212, w: 37, text: 'clear' },
  { x: 85, y: 305, w: 116, text: 'fill -1., apply triangle' },
  { x: 220, y: 305, w: 138, text: 'fill -1., apply triangle half' },
  { x: 85, y: 335, w: 126, text: 'fill -1., apply blackman' },
  { x: 220, y: 335, w: 140, text: 'fill -1., apply hanning half' },
]
const funWires = [
  'M39.500 35V406',
  'M70 62.500H54Q40 62.500 40 76',
  'M69 66V69M69 96V99',
  'M70 91.500H54Q40 91.500 40 104',
  'M60 140H52Q40 141 40 154',
  'M129 141.500H54Q41 141.500 40 156',
  'M60 165H52Q40 166 40 179',
  'M129 166.500H54Q41 166.500 40 181',
  'M60 192H52Q40 193 40 206',
  'M129 190V193.500H54Q41 193.500 40 208',
  'M99.500 275V284Q99.500 294.500 88 294.500H54Q40 295 40 308',
  'M94.500 325V329M229.500 325V329.500H54Q40 330 40 343',
  'M94.500 355V360Q94.500 366.500 86 366.500M229.500 355V362Q229 366.500 222 366.500H54Q40 367 40 380',
  'M229.500 385V389.500H54Q40 390 40 400',
]

function FunPatch({ place, nodes, wires }: { place: string; nodes: PatchNode[]; wires: string[] }) {
  return (
    <PatcherWindow title="[fun]" place={place} top={funTop} left={funLeft} right={funRight} bottom={funBottom} playGap="mr-[26px]" powerGap="mr-[15px]" meter="long">
      <Wires paths={wires} />
      {nodes.map((n) => (
        <Box key={`${n.x}-${n.y}`} node={{ ...n, kind: 'msg' }} small />
      ))}
      <div className="absolute top-[405px] left-[30px] flex h-[25px] w-[25px] flex-col items-center bg-[#272727] pt-[3px] text-[10px] leading-3 font-bold text-white [font-family:'DejaVu_Sans',sans-serif]">
        <span className="border-x-6 border-t-6 border-x-transparent border-t-[#c4e2e6]" />
        <span className="pt-0.5">1</span>
      </div>
    </PatcherWindow>
  )
}

// ─── dock ──────────────────────────────────────────────────────────────
function txt(s: string, fill: string, size: number, y: number, family = 'Liberation Sans') {
  return (
    <text x="16" y={y} textAnchor="middle" fontSize={size} fontWeight="700" fontFamily={`${family}, sans-serif`} fill={fill}>
      {s}
    </text>
  )
}

const DOCK: { name: string; dot?: boolean; art: ReactNode }[] = [
  { name: 'Finder', dot: true, art: <><rect x="2" y="3" width="28" height="27" fill="#1e9bf6" /><path d="M18 3H30V30H19Q17 25 17 19H14Q14 9 18 3Z" fill="#e4eff8" /><path d="M9 10V14M23 10V14M7 21Q16 28 25 21" stroke="#12304e" strokeWidth="1.6" fill="none" /></> },
  { name: 'Jedit', dot: true, art: <><path d="M5 4 25 1 30 27 10 31Z" fill="#e4e4e4" stroke="#c0c0c0" strokeWidth=".600" /><path d="M16 9 24 8M13 15 26 13M13 20 27 18M14 25 24 23" stroke="#bbb" /><circle cx="9" cy="9" r="8" fill="#26282b" stroke="#ddd" strokeWidth=".800" /><text x="9" y="13.500" textAnchor="middle" fontSize="12" fontWeight="700" fontFamily="Liberation Serif, serif" fill="#fff">J</text><path d="M30 12 21 29" stroke="#3a9a3a" strokeWidth="2.500" /></> },
  { name: 'Firefox', dot: true, art: <><circle cx="16" cy="17.500" r="13" fill="#ff6a2a" /><path d="M18 1Q31 9 29 20 26 29 16 30.500 28 20 18 1Z" fill="#ffcf3a" /><circle cx="16" cy="18" r="7" fill="#6a3fd0" /><path d="M4 10Q8 6 10 10 14 9 17 12L12 15 17 19Q9 24 7 16Z" fill="#ffa02c" /></> },
  { name: 'Chrome', art: <><rect x="2" y="2" width="28" height="28" rx="6" fill="#fafafa" /><circle cx="16" cy="16" r="11" fill="#2fa84f" /><path d="M16 16 26 11A11 11 0 0 1 15.500 27Z" fill="#fbc116" /><path d="M6.500 10.500A11 11 0 0 1 25.800 11H16L11 19Z" fill="#e33b2e" /><circle cx="16" cy="16" r="5.500" fill="#fff" /><circle cx="16" cy="16" r="4.200" fill="#3b7ded" /></> },
  { name: 'Vivaldi', art: <><rect x="2" y="2" width="28" height="28" rx="7" fill="#ef3f40" /><circle cx="16" cy="16" r="10.500" fill="#fff" /><path d="M11 12 16 21 21 12" stroke="#ef3f40" strokeWidth="4" strokeLinecap="round" fill="none" /></> },
  { name: 'Safari', art: <><circle cx="16" cy="16" r="14.500" fill="#e8edf2" /><circle cx="16" cy="16" r="12.800" fill="#1f8df0" /><path d="M26 6 18 18 14 14Z" fill="#f2392c" /><path d="M6 26 14 14 18 18Z" fill="#fff" /></> },
  { name: 'FB', art: <><g transform="rotate(-10 16 16)"><text x="9.500" y="26" textAnchor="middle" fontSize="22" fontWeight="700" fontFamily="Liberation Serif, serif" fill="#3a7a2a" stroke="#e0641c" strokeWidth=".700">F</text><text x="21.500" y="22" textAnchor="middle" fontSize="22" fontWeight="700" fontFamily="Liberation Serif, serif" fill="#3a8a2a" stroke="#e0641c" strokeWidth=".700">B</text></g></> },
  { name: 'Max', dot: true, art: <><rect x="1" y="1" width="30" height="30" rx="4" fill="#39393b" /><circle cx="16" cy="11" r="4.200" stroke="#fff" strokeWidth="2.200" fill="none" /><circle cx="16" cy="20.500" r="5.500" stroke="#fff" strokeWidth="2.200" fill="none" /><circle cx="16" cy="20.500" r="1.800" fill="#4bb0d0" /></> },
  { name: 'Terminal', art: <><rect x="1" y="2" width="30" height="27" rx="2" fill="#bdbdbd" /><rect x="2.500" y="4" width="27" height="24" fill="#191919" /><path d="M5 8 8 10 5 12M9 12H13" stroke="#fff" strokeWidth="1.200" fill="none" /></> },
  { name: 'Pd', art: <><path d="M6 9V14" stroke="#333" strokeWidth="2" /><rect x="1" y="0" width="9" height="10" rx="3" fill="#1faf2c" stroke="#0b5c14" /><path d="M1 13H31V31H1Z" fill="#eee" stroke="#555" />{txt('Pd', '#111', 15, 27, 'Liberation Mono')}</> },
  { name: 'Processing', art: <><rect x="1" y="1" width="30" height="30" rx="3" fill="#0c2238" /><path d="M10 25V7H16Q22 7 22 12T16 17H13V25M8 25H15" stroke="#fff" strokeWidth="2.200" fill="none" /><circle cx="20" cy="25.500" r="2" stroke="#fff" fill="none" /><circle cx="25.500" cy="25.500" r="2" stroke="#fff" fill="none" /></> },
  { name: 'Processing 2', art: <><rect x="1" y="1" width="30" height="30" rx="2" fill="#142438" />{txt('P', '#f2f2f2', 24, 25, 'Liberation Serif')}</> },
  { name: 'i3', art: <><circle cx="16" cy="16" r="14.500" fill="#111" stroke="#aaa" />{txt('i3', '#fff', 17, 22, 'Liberation Serif')}</> },
  { name: 'Arduino', art: <><circle cx="16" cy="16" r="15" fill="#12949a" /><circle cx="10.500" cy="16" r="4.500" stroke="#fff" strokeWidth="2.200" fill="none" /><circle cx="21.500" cy="16" r="4.500" stroke="#fff" strokeWidth="2.200" fill="none" /><path d="M9 16H12M20 16H23M21.500 14.500V17.500" stroke="#fff" /></> },
  { name: 'Cube', art: <><path d="M1 6 17 1 31 6 17 12Z" fill="#ccc" stroke="#222" /><path d="M1 6 17 12V31L3 25Z" fill="#777" stroke="#222" /><path d="M31 6 17 12V31L30 24Z" fill="#4a4a4a" stroke="#222" /><path d="M5 12 13.500 15V25.500L6 22ZM20.500 15 28 12V22L20.500 25.500ZM10 6 17 4 24 6 17 9Z" fill="none" stroke="#eee" strokeWidth="1.800" /><path d="M8.500 16 11 17V21L8.500 20ZM23 17 25.500 16V20L23 21Z" fill="#eee" /></> },
  { name: 'Robot', art: <><path d="M10 1H22L30 10 29 26 20 31H12L3 26 2 10Z" fill="#26282b" /><path d="M11 3H21V10H11Z" fill="#3f4246" /><path d="M9 15 13 17M23 15 19 17M7 22 9 26M25 22 23 26" stroke="#ef5a1c" strokeWidth="2" /><path d="M9 20H12V25H9ZM14 20H18V25H14ZM20 20H23V25H20ZM12 27H20V29H12Z" fill="#ddd" /></> },
  { name: 'Phone', art: <><path d="M0 2 20 0 32 23V28L12 32 8 28Z" fill="#d8d8d8" stroke="#8a8a8a" strokeWidth=".600" /><path d="M0 2 20 0 31 22 11 27Z" fill="#1c1c1e" /><path d="M4 4 19 2.500 23 10 10 18Z" fill="#4a4a4c" /></> },
  { name: 'Propeller', art: <><path d="M2 27Q4 11 16 10 28 11 30 27 16 31 2 27Z" fill="#1b3a63" /><path d="M9 26Q9 14 15 11 17 18 16 27ZM20 27Q21 16 18 11 27 15 28 26Z" fill="#e9e9e2" /><path d="M16 10V6M0 5Q8 8 16 5.500 24 4 32 6" stroke="#26456d" strokeWidth="2.500" fill="none" /></> },
  { name: 'Unity', art: <><path d="M1 16 14 5 29 1 31 16 29 31 14 27Z" fill="#151515" /><path d="M7 15 22 6 18 15ZM7 17.500H18L22 26ZM25 7 20.500 16.200 25 25.500Q27 16 25 7Z" fill="#fff" /></> },
  { name: 'Xcode', art: <><path d="M4 7 27 5 31 27 1 30Z" fill="#2e93ee" /><path d="M8 25 15 10 25 24M6 21 27 18" stroke="#8cc7fa" fill="none" /><path d="M25 3 17 30" stroke="#222" strokeWidth="3.200" /><path d="M17 3Q24-1 31 3V7L27 5 19 7Z" fill="#d3d6da" /></> },
  { name: 'Radar', art: <><circle cx="16" cy="16" r="14" fill="#3a3114" stroke="#999" strokeWidth="1.500" /><path d="M16 16 22 4Q28 7 29 12Z" fill="#e8cc2c" /><path d="M16 3V29M3 16H29" stroke="#b59a2d" strokeWidth=".800" /><circle cx="16" cy="16" r="9" stroke="#b59a2d" strokeWidth=".800" fill="none" /><circle cx="16" cy="16" r="4.500" stroke="#b59a2d" strokeWidth=".800" fill="none" /></> },
  { name: 'Spectrum', art: <><path d="M1 17Q4 0 9 0 14 0 16 17Z" fill="#c8262a" /><path d="M5 17V4L7.500 0V17Z" fill="#e8e12c" /><path d="M7.500 17V0Q11 0 12 5V17Z" fill="#3cae3e" /><path d="M16 16Q18 32 24 32 30 32 31 16Z" fill="#2f9e3c" /><path d="M19 16H23V31.500Q20 30 19 26Z" fill="#d62f2a" /><path d="M23 16H26V31.500H23Z" fill="#e8d22c" /><path d="M1 17Q4 0 9 0T16 16.500 24 31.500 31 16Z" fill="none" stroke="#111" /></> },
  { name: 'Soundflower', dot: true, art: <><path d="M15 6Q27-2 25 7T30 13Q28 17 22 19" stroke="#161616" strokeWidth="3" fill="none" /><path d="M1 6 13 2 17 12 5 15Z" fill="#eee" stroke="#333" /><path d="M8 20 20 16 24 27 12 31Z" fill="#eee" stroke="#333" /><path d="M5 9Q5 5 9 5T13 9ZM12 24Q12 20 16 19T20 22Z" fill="#c8262a" /></> },
  { name: 'Notebook', art: <><path d="M3 7 24 3 29 27 8 31Z" fill="#1b2fb4" stroke="#0a1254" strokeWidth="1.500" /><path d="M8 11 22 8M9 16 23 13M10 21 24 18" stroke="#3d52d6" /><path d="M10 24 31 9M22 8 27 26M18 15 30 20" stroke="#b08a3a" strokeWidth="1.500" /></> },
  { name: 'Image Capture', art: <><path d="M2 1H24L27 7H0Z" fill="#5c5f62" /><path d="M4 7H23V20H4Z" fill="#aee2f6" /><path d="M2 20H25V25H2Z" fill="#4d5256" /><rect x="18" y="16" width="14" height="15" fill="#e8e8e4" stroke="#999" /><path d="M20 19H24V24H20ZM26 19H30M26 22H30" stroke="#999" fill="#c98a4a" /></> },
  { name: 'Grapher', art: <><rect x="2" y="4" width="28" height="24" fill="#eee" /><path d="M5 24H27V7Z" fill="#999" /><path d="M9 2 21 29M23 2 11 29" stroke="#f4f4f4" strokeWidth="2.500" /><path d="M10.500 2 22 28M21.500 2 10 28" stroke="#8a8a8a" strokeWidth=".800" /><circle cx="16" cy="17" r="1.500" fill="#777" /></> },
  { name: 'Frog clock', art: <><path d="M5 9Q4 5 8 5 8 0 12 1L16 3 20 1Q24 0 24 5 28 5 27 9L16 12Z" fill="#4aa02c" /><circle cx="12" cy="4" r="1.500" fill="#fff" /><circle cx="20" cy="4" r="1.500" fill="#fff" /><circle cx="16" cy="20" r="11.500" fill="#f2f2e2" stroke="#b8b890" strokeWidth="1.500" /><path d="M10 15 16 21 22 18" stroke="#222" strokeWidth="1.600" fill="none" /><path d="M4 29 7 31M28 29 25 31" stroke="#4aa02c" strokeWidth="2" /></> },
  { name: 'Drum', art: <><circle cx="16" cy="16" r="14" fill="#222" stroke="#e0bc4c" strokeWidth="3" /><circle cx="16" cy="16" r="10" fill="#383838" stroke="#888" /><path d="M11 18V13M14 18V11M17 18V13M20 18V14" stroke="#aaa" /></> },
  { name: 'Piano', art: <><rect x="2" y="3" width="28" height="27" fill="#1c1c1c" /><path d="M4 15H28V29H4Z" fill="#fff" /><path d="M8 15V29M12 15V29M16 15V29M20 15V29M24 15V29" stroke="#222" strokeWidth="1" /><path d="M8 15V23M12 15V23M20 15V23M24 15V23" stroke="#222" strokeWidth="2.200" /></> },
  { name: 'iTunes', art: <><circle cx="16" cy="16" r="14" fill="#fafafa" stroke="#d58de0" strokeWidth="1.500" /><path d="M12 22V9.500L22 7.500V20" stroke="#d3489c" strokeWidth="2" fill="none" /><ellipse cx="10.500" cy="22" rx="3" ry="2.300" fill="#9a55e0" /><ellipse cx="20.500" cy="20" rx="3" ry="2.300" fill="#e0487c" /></> },
  { name: 'Flash', art: <><rect x="1" y="1" width="30" height="30" fill="#a80f12" /><path d="M23 7Q17 7 16 13L13 22Q12 26 8 26M13 16H20" stroke="#fff" strokeWidth="3" fill="none" /></> },
  { name: 'GarageBand', art: <><path d="M29 2 15 19" stroke="#7c4a1e" strokeWidth="2.500" /><path d="M27 0 32 3 29 6Z" fill="#5b3312" /><path d="M4 17Q5 12 9 15 13 17 15 14 19 14 17 18 18 21 19 24 17 31 10 31 1 29 4 17Z" fill="#cf7a1e" stroke="#5b3312" strokeWidth="1.500" /><path d="M8 20 14 26" stroke="#222" strokeWidth="3" /></> },
  { name: 'Check', art: <><path d="M15 1 30 17 17 31 2 15Z" fill="#dfe9f7" stroke="#5577b8" /><path d="M9 13 15 20 30 5" stroke="#f1a51c" strokeWidth="4.500" fill="none" /></> },
  { name: 'Headphones', art: <><circle cx="16" cy="16" r="14.500" fill="#5b5b5b" stroke="#333" /><circle cx="16" cy="17" r="8.500" fill="#9c9c9c" /><path d="M6 19Q6 6 16 6T26 19" stroke="#1a1a1a" strokeWidth="3" fill="none" /><path d="M14 21V13L20 12V20" stroke="#222" strokeWidth="1.800" fill="none" /><circle cx="12.500" cy="21" r="2" fill="#222" /><circle cx="18.500" cy="20" r="2" fill="#222" /></> },
  { name: 'Converter', art: <><rect x="1" y="2" width="18" height="16" fill="#1b5ea8" /><path d="M3 6H17M3 10H17" stroke="#7db4e8" strokeDasharray="2 1" /><rect x="12" y="5" width="18" height="12" fill="#3aae3a" /><rect x="6" y="15" width="22" height="15" rx="2" fill="#15243c" /><rect x="9" y="17" width="9" height="9" fill="#3b8fe0" /></> },
  { name: 'Updater', art: <><rect x="1" y="1" width="30" height="30" rx="3" fill="#1f4767" /><path d="M16 4 29 16H24V28H8V16H3Z" fill="#fff" />{txt('G', '#1f4767', 14, 24)}</> },
  { name: 'Preview', art: <><path d="M2 7 26 2 29 23 5 28Z" fill="#f5f5f5" /><path d="M4 9 25 4 27 21 6 25Z" fill="#6a9cd0" /><path d="M6 25 5 18 26 14 27 21Z" fill="#c7b48a" /><circle cx="22" cy="22" r="6" fill="#8a9aa6" stroke="#444" strokeWidth="2" /></> },
  { name: 'App note', art: <><rect x="1" y="12" width="31" height="20" fill="#f1eb8a" /><path d="M6 1H11V18L8.500 22 6 18Z" fill="#2a4bc0" /><text x="21" y="27" textAnchor="middle" fontSize="11" fontWeight="700" fontFamily="Liberation Sans, sans-serif" fill="#222">App</text></> },
  { name: 'Clapper', art: <><path d="M2 6 29 0 30 6 3 12Z" fill="#222" /><path d="M8 5 12 10M15 3 19 8M22 2 26 7" stroke="#fff" strokeWidth="3" /><rect x="3" y="12" width="27" height="19" rx="2" fill="#1d6fd0" /><path d="M3 12H30V15H3Z" fill="#222" /><path d="M14 17H19V22H23L16.500 29 10 22H14Z" fill="#fff" /></> },
  { name: 'QuickTime 7', art: <><circle cx="15" cy="15" r="10.500" fill="none" stroke="#2a3f6e" strokeWidth="7" /><circle cx="15" cy="15" r="6" fill="#3a90e8" /><path d="M17 18 30 31H22L15 22Z" fill="#2a3f6e" /></> },
  { name: 'QuickTime', art: <><circle cx="15.500" cy="15.500" r="12" fill="#cfe4fa" stroke="#1e87ea" strokeWidth="5" /><path d="M15 17 20 6M16 17 29 30" stroke="#1e87ea" strokeWidth="4" /></> },
  { name: 'VLC', art: <><path d="M14 2H18L26 26H6Z" fill="#f28a12" /><path d="M12.500 8H19.500L21 13H11ZM9.500 18H22.500L24 22H8Z" fill="#f6f6f6" /><path d="M3 25H29L31 31H1Z" fill="#ef8412" /></> },
  { name: 'Keynote', art: <><path d="M5 2H27L31 15H1Z" fill="#2d97ea" /><path d="M1 15H31V17H1Z" fill="#e8e8e8" /><path d="M16 17V27" stroke="#e2e2e2" strokeWidth="2.500" /><ellipse cx="16" cy="28.500" rx="8" ry="2.500" fill="#ececec" /><circle cx="16" cy="9" r="4" fill="#fff" /><path d="M16 9V5A4 4 0 0 1 20 9Z" fill="#f29a2c" /></> },
  { name: 'Pages', art: <><path d="M5 4 26 2 29 29 6 31Z" fill="#f6f6f6" /><path d="M8 9 18 8 19 17 9 18Z" fill="#f07c1c" /><path d="M20 9 25 9M20 12 25 12M10 22 25 21M10 25 25 24" stroke="#aaa" /><path d="M30 5 17 26" stroke="#d89028" strokeWidth="3" /></> },
  { name: 'Disk Utility', art: <><path d="M4 11H26L29 31H1Z" fill="#a0a4a8" /><circle cx="14" cy="21" r="7" fill="#c9cdd0" /><path d="M1 27H28" stroke="#666" /><path d="M12 20Q12 4 17 6T19 12M12 20Q20 24 27 17T27 1" stroke="#26282a" strokeWidth="1.800" fill="none" /></> },
  { name: 'Zoom', art: <><rect x="1" y="1" width="30" height="30" rx="11" fill="#2e6df2" /><rect x="7" y="11" width="12" height="10" rx="2" fill="#fff" /><path d="M20 14 25 11V21L20 18Z" fill="#fff" /></> },
  { name: 'Intel Power Gadget', dot: true, art: <><rect x="0" y="0" width="32" height="32" rx="5" fill="#fff" /><rect x="1.500" y="1.500" width="29" height="29" rx="4" fill="#1277c2" /><path d="M3 19 8 12 13 20 20 7 21 15 28 4" stroke="#fff" strokeWidth="2" fill="none" /><text x="20" y="27" textAnchor="middle" fontSize="9" fontFamily="Liberation Sans, sans-serif" fill="#fff">intel</text></> },
  { name: 'Activity', dot: true, art: <><rect x="1" y="1" width="30" height="30" rx="2" fill="#e98f76" stroke="#9a6a70" /><path d="M2 17 6 14 7 17 11 15 12 9 13 16 17 15 18 6 19 16 23 15 24 10 25 16 30 15" stroke="#7a3fa0" fill="none" /><path d="M2 17H30" stroke="#4a5ac0" /></> },
  { name: 'Wi-Fi', dot: true, art: <><circle cx="16" cy="16" r="14.500" fill="#fff" /><path d="M6 13Q16 4 26 13M10 18Q16 12.500 22 18" stroke="#1f7be0" strokeWidth="3" fill="none" /><circle cx="16" cy="22" r="3" fill="#a9b2ba" /></> },
  { name: 'System Preferences', art: <><rect x="1" y="3" width="30" height="27" rx="3" fill="#8a8d90" /><circle cx="16" cy="16" r="10.500" fill="none" stroke="#2a2b2c" strokeWidth="3" strokeDasharray="2.600 .800" /><circle cx="16" cy="16" r="8.500" fill="#6f7275" stroke="#2a2b2c" strokeWidth="1.800" /><path d="M16 16V8M16 16 9 20M16 16 23 20" stroke="#2a2b2c" strokeWidth="1.800" /></> },
]

function Dock() {
  return (
    <nav aria-label="Dock" className="absolute inset-x-[31px] bottom-0 flex h-[45px] items-start justify-center rounded-t-md border-t border-[#f07a55]/60 bg-[#ec6035] pt-1">
      {DOCK.map((d) => (
        <button key={d.name} type="button" aria-label={d.name} className="flex w-9 flex-col items-center gap-1">
          <svg viewBox="0 0 32 32" className="size-8">{d.art}</svg>
          {d.dot && <span className="size-1 rounded-full bg-[#5a1410]" />}
        </button>
      ))}
      <span className="mx-2 h-9 w-px bg-[#a8452a]" />
      <button type="button" aria-label="Trash" className="flex w-9 justify-center">
        <svg viewBox="0 0 32 34" className="h-[34px] w-8">
          <path d="M5 5H28L25 33H8Z" fill="#dcdcdc" fillOpacity=".9" />
          <path d="M5 5 10 1 14 4 19 1 24 2 28 5 26 8H7Z" fill="#f4f4f4" stroke="#aaa" strokeWidth=".600" />
          <path d="M9 10 11 31M13 10 14 31M17 10V31M21 10 20 31M25 10 23 31" stroke="#a2a2a2" strokeWidth=".900" />
        </svg>
      </button>
    </nav>
  )
}

// ─── desktop ───────────────────────────────────────────────────────────
const BRIGHT = [
  [1531, 37, 1], [1604, 44, 1], [1715, 40, 2], [1709, 45, 1], [1699, 54, 1], [1716, 71, 1], [1594, 94, 1], [1607, 108, 1], [1689, 96, 1],
  [1679, 110, 1], [1657, 126, 1], [1721, 126, 1], [1577, 145, 1], [1741, 143, 1], [1514, 147, 1], [1627, 162, 1], [1641, 163, 1],
  [1536, 173, 1], [1756, 185, 1], [1817, 185, 1], [1611, 191, 1], [1547, 201, 1], [1614, 207, 1], [1741, 202, 1], [1574, 219, 1],
  [1566, 219, 1], [1601, 233, 1], [1628, 248, 2], [1691, 245, 1], [1746, 266, 3], [1777, 263, 1], [1649, 286, 2], [1636, 273, 1],
  [1677, 288, 1], [1709, 298, 1], [1689, 305, 1], [1586, 315, 1], [1629, 316, 1], [1671, 319, 1], [1772, 315, 1], [1824, 324, 1],
  [1712, 333, 1], [1525, 340, 2], [1806, 363, 1], [1842, 363, 1], [1671, 373, 1], [1918, 121, 3], [1169, 48, 3], [1886, 221, 2],
  [1817, 124, 1], [1836, 219, 1], [1849, 280, 1], [980, 475, 3], [1039, 518, 3], [1010, 479, 2], [968, 402, 2], [828, 478, 1],
]
const DUST = Array.from({ length: 420 }, (_, i) => {
  const a = Math.abs(Math.sin(i * 12.9898) * 43758.5453) % 1
  const b = Math.abs(Math.sin(i * 78.233 + 3) * 24634.6345) % 1
  return { x: Math.round(a * 1920), y: 24 + Math.round(b * 1000), dim: i % 3 !== 0 }
})

function Stars() {
  return (
    <svg className="absolute inset-0 size-full" aria-hidden="true">
      {DUST.map((s, i) => (
        <circle key={i} cx={s.x} cy={s.y} r={s.dim ? 0.8 : 1} fill="#cfe0f5" fillOpacity={s.dim ? 0.35 : 0.8} />
      ))}
      {BRIGHT.map(([x, y, r]) => (
        <circle key={`${x}-${y}`} cx={x} cy={y} r={r === 1 ? 1.1 : r} fill="#eef5ff" />
      ))}
    </svg>
  )
}

const folder = (
  <svg viewBox="0 0 28 22" className="h-[22px] w-7">
    <path d="M1 2Q1 1 2 1H9L11 3H26Q27 3 27 4V20Q27 21 26 21H2Q1 21 1 20Z" fill="#5fbdf3" />
    <path d="M1 6H27V20Q27 21 26 21H2Q1 21 1 20Z" fill="#6cc8fa" />
    <path d="M1 21V17H5V21Z" fill="#eee" />
    <path d="M2 20 4 18M2.500 18H4V19.500" stroke="#222" strokeWidth=".800" fill="none" />
  </svg>
)
const textDoc = (
  <svg viewBox="0 0 22 28" className="h-7 w-[22px]">
    <path d="M1 1H15L21 7V27H1Z" fill="#e6e6e6" />
    <path d="M15 1V7H21Z" fill="#bbb" />
    <path d="M11 6 17 9.500V16.500L11 20 5 16.500V9.500Z" fill="none" stroke="#8a8a8a" strokeWidth="1.500" />
    <text x="11" y="17" textAnchor="middle" fontSize="10" fontWeight="700" fontFamily="Liberation Serif, serif" fill="#777">J</text>
    <rect x="1" y="21" width="20" height="6" fill="#777" />
    <text x="12" y="26.500" textAnchor="middle" fontSize="6" fontWeight="700" fontFamily="Liberation Sans, sans-serif" fill="#eee">TEXT</text>
  </svg>
)
const drive = (top: string, label: boolean) => (
  <svg viewBox="0 0 26 26" className="size-[26px]">
    <path d="M4 1H22L25 21V25H1V21Z" fill="#c3c8ca" />
    <path d={label ? 'M4 1H22L24.500 20H1.500Z' : 'M4 1H22L24 17H2Z'} fill={top} />
    <path d="M1 21H25" stroke="#888" />
    {label && <path d="M5 4H21M8 24H20" stroke="#333" strokeWidth="1.500" />}
    {label && <circle cx="13" cy="13" r="5" fill="#b4babd" />}
  </svg>
)
const DESK: { place: string; art: ReactNode; label: string }[] = [
  { place: 'right-[84px] top-[29px]', art: drive('#f0a01c', false), label: '500GBwork\n1' },
  { place: 'right-[-2px] top-[33px]', art: drive('#90979b', true), label: 'Macintosh\nHD' },
  { place: 'right-[-2px] top-[101px]', art: textDoc, label: 'schedule' },
  { place: 'right-[1px] top-[162px]', art: folder, label: '1106' },
  { place: 'right-[2px] top-[223px]', art: folder, label: 'ASL' },
  { place: 'right-[3px] top-[281px]', art: folder, label: 'お仕事' },
  { place: 'right-[2px] top-[340px]', art: textDoc, label: 'メアド' },
]

const MENUS = ['File', 'Edit', 'View', 'Object', 'Arrange', 'Options', 'Debug', 'Window', 'Extras', 'Help']

function MenuBar() {
  return (
    <header className="absolute inset-x-0 top-0 flex h-[22px] items-center bg-[#cacaca] pt-px pl-5 text-[13px] font-medium text-black [font-family:Inter,'Noto_Sans_CJK_JP',sans-serif]">
      <FaApple className="mr-5 size-[15px]" />
      <button type="button" className="mr-[18px] font-extrabold">Max</button>
      <div className="flex gap-5">
        {MENUS.map((m) => (
          <button key={m} type="button">{m}</button>
        ))}
      </div>
      <div className="ml-auto flex items-center pr-[21px]">
        <svg viewBox="0 0 20 16" className="h-4 w-5">
          <path d="M5 11.500H1.500V2.500H18.500V11.500H15" fill="none" stroke="#222" strokeWidth="1.300" />
          <path d="M10 8.500 15.500 15H4.500Z" />
        </svg>
        <History className="ml-3 size-[18px]" strokeWidth={1.8} />
        <Bluetooth className="ml-3 size-4 text-[#a4a4a4]" strokeWidth={1.8} />
        <svg viewBox="0 0 20 16" className="ml-3 h-4 w-5">
          <path d="M1 5Q10-2 19 5L10 15Z" fill="none" stroke="#333" strokeWidth="1.200" />
        </svg>
        <span className="ml-3 flex size-4 items-center justify-center rounded-[3px] bg-black text-[12px] text-white">あ</span>
        <Volume1 className="ml-3 size-[18px]" fill="currentColor" strokeWidth={1.8} />
        <time className="ml-3.5">金 12:45</time>
        <Search className="ml-[18px] size-4" strokeWidth={1.8} />
        <List className="ml-3 size-5" strokeWidth={2} />
      </div>
    </header>
  )
}

function ConsoleBar() {
  return (
    <div className="absolute top-[1090px] left-[1530px] flex h-[42px] w-[341px] items-center rounded-b-md bg-[#242424] pt-2 pl-2 text-[#cfcfcf] shadow-[0_6px_16px_rgba(0,0,0,0.45)]">
      <button type="button" aria-label="clear" className="size-5">
        <svg viewBox="0 0 20 20"><path d="M3.500 3.500 16.500 16.500M16.500 3.500 3.500 16.500" stroke="currentColor" strokeWidth="3" /></svg>
      </button>
      <button type="button" aria-label="times" className="ml-[34px] size-5">
        <svg viewBox="0 0 20 20"><circle cx="10" cy="10" r="8" fill="currentColor" /><path d="M9.500 4V10L13.500 14" stroke="#242424" strokeWidth="1.800" fill="none" /></svg>
      </button>
      <button type="button" aria-label="errors" className="ml-[17px] size-5">
        <svg viewBox="0 0 20 20"><path fillRule="evenodd" d="M10 2 18 18H2ZM9 8V13H11V8ZM9 14.500V16.500H11V14.500Z" fill="currentColor" /></svg>
      </button>
      <button type="button" aria-label="scroll" className="ml-[17px] size-5 text-[#d9c71d]">
        <svg viewBox="0 0 20 20"><path d="M6 2H14V5H6ZM6 6.500H14V8.500H6ZM6 10H14V11.500H6ZM3 12.500H17L10 18Z" fill="currentColor" /></svg>
      </button>
      <button type="button" aria-label="back" className="ml-[34px] size-5 text-[#484848]">
        <svg viewBox="0 0 20 20"><path d="M2 10 9 4V8H17V12H9V16Z" fill="currentColor" /></svg>
      </button>
    </div>
  )
}

export default function App() {
  return (
    <div className="relative h-screen w-full overflow-hidden bg-[linear-gradient(to_bottom,#000_0%,#000a14_14%,#001c38_32%,#002b5c_48%,#003f88_62%,#0850a8_76%,#1c4f9c_81%,#5a4166_86%,#963634_91%,#b8371f_95%,#ee3210_100%)] [font-family:Lato,sans-serif]">
      <Stars />
      {DESK.map((d) => (
        <a key={d.label} href="#" className={`absolute flex w-20 flex-col items-center gap-1.5 ${d.place}`}>
          {d.art}
          <span className="text-center text-[12px] leading-[14px] font-bold whitespace-pre text-white [font-family:Inter,'Noto_Sans_CJK_JP',sans-serif]">{d.label}</span>
        </a>
      ))}
      <span className="absolute top-[490px] right-3 text-[12px] leading-[14px] font-bold text-white [font-family:Inter,sans-serif]">2</span>
      <ConsoleBar />
      <FunPatch place="left-[25px] top-[594px] h-[529px] w-[506px]" nodes={funDelays} wires={funWires} />
      <FunPatch
        place="left-[546px] top-[595px] h-[529px] w-[506px]"
        nodes={funFeedback}
        wires={[...funWires, 'M99.500 233V236Q99.500 241.500 90 241.500H54Q40 242 40 255']}
      />
      <GenPatch />
      <PfftPatch />
      <MainPatch />
      <MenuBar />
      <Dock />
    </div>
  )
}
